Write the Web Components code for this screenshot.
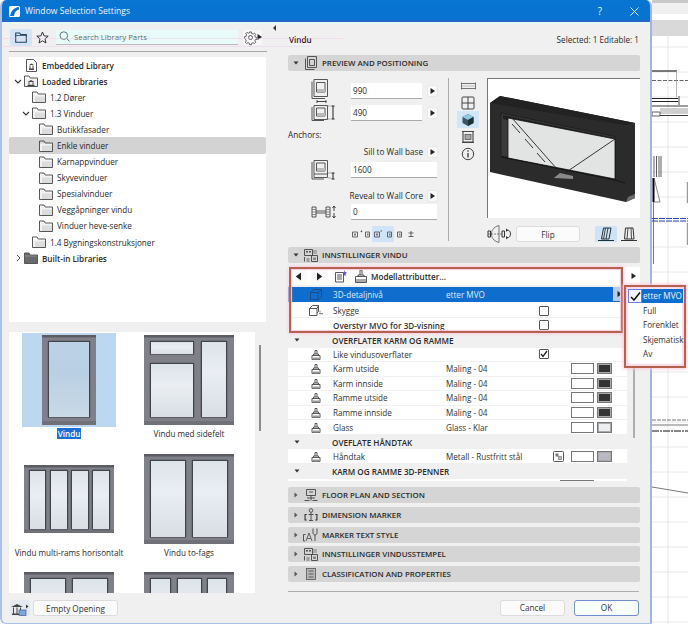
<!DOCTYPE html>
<html lang="no"><head><meta charset="utf-8"><title>Window Selection Settings</title>
<style>
html,body{margin:0;padding:0;background:#fff}
body{width:688px;height:624px;position:relative;overflow:hidden;display:flex;font-family:"Open Sans","Noto Sans",sans-serif;font-size:8.15px;color:#2a2a2a}
</style></head><body>
<selection-dialog>
  <library-pane slot="left">
    <tree-row slot="tree" icon="doc" bold>Embedded Library</tree-row>
    <tree-row slot="tree" icon="libfolder" exp="down" bold>Loaded Libraries</tree-row>
    <tree-row slot="tree" icon="folder" level="1">1.2 Dører</tree-row>
    <tree-row slot="tree" icon="folder" level="1" exp="down">1.3 Vinduer</tree-row>
    <tree-row slot="tree" icon="folder" level="2">Butikkfasader</tree-row>
    <tree-row slot="tree" icon="folder" level="2" selected>Enkle vinduer</tree-row>
    <tree-row slot="tree" icon="folder" level="2">Karnappvinduer</tree-row>
    <tree-row slot="tree" icon="folder" level="2">Skyvevinduer</tree-row>
    <tree-row slot="tree" icon="folder" level="2">Spesialvinduer</tree-row>
    <tree-row slot="tree" icon="folder" level="2">Veggåpninger vindu</tree-row>
    <tree-row slot="tree" icon="folder" level="2">Vinduer heve-senke</tree-row>
    <tree-row slot="tree" icon="folder" level="1">1.4 Bygningskonstruksjoner</tree-row>
    <tree-row slot="tree" icon="darkfolder" exp="right" bold>Built-in Libraries</tree-row>
    <part-thumb slot="parts" kind="single" selected>Vindu</part-thumb>
    <part-thumb slot="parts" kind="side">Vindu med sidefelt</part-thumb>
    <part-thumb slot="parts" kind="four">Vindu multi-rams horisontalt</part-thumb>
    <part-thumb slot="parts" kind="two">Vindu to-fags</part-thumb>
    <part-thumb slot="parts" kind="two"></part-thumb>
    <part-thumb slot="parts" kind="three"></part-thumb>
  </library-pane>
  <settings-pane slot="right">
    <panel-head slot="h1" icon="h-preview" open>PREVIEW AND POSITIONING</panel-head>
    <preview-panel slot="preview"></preview-panel>
    <panel-head slot="h2" icon="h-settings" open>INNSTILLINGER VINDU</panel-head>
    <attr-toolbar slot="tools">Modellattributter...</attr-toolbar>
    <attr-row slot="rows" icon="cube" value="etter MVO" active>3D-detaljnivå</attr-row>
    <attr-row slot="rows" icon="cubeshadow" check="off">Skygge</attr-row>
    <attr-row slot="rows" check="off" bold>Overstyr MVO for 3D-visning</attr-row>
    <attr-row slot="rows" group>OVERFLATER KARM OG RAMME</attr-row>
    <attr-row slot="rows" icon="brush" check="on">Like vindusoverflater</attr-row>
    <attr-row slot="rows" icon="brush" value="Maling - 04" swatch="#333">Karm utside</attr-row>
    <attr-row slot="rows" icon="brush" value="Maling - 04" swatch="#333">Karm innside</attr-row>
    <attr-row slot="rows" icon="brush" value="Maling - 04" swatch="#333">Ramme utside</attr-row>
    <attr-row slot="rows" icon="brush" value="Maling - 04" swatch="#333">Ramme innside</attr-row>
    <attr-row slot="rows" icon="brush" value="Glass - Klar" swatch="#eceef0">Glass</attr-row>
    <attr-row slot="rows" group>OVEFLATE HÅNDTAK</attr-row>
    <attr-row slot="rows" icon="brush" value="Metall - Rustfritt stål" swatch="#b9b9c6" link>Håndtak</attr-row>
    <attr-row slot="rows" group>KARM OG RAMME 3D-PENNER</attr-row>
    <panel-head slot="h3" icon="h-floor">FLOOR PLAN AND SECTION</panel-head>
    <panel-head slot="h3" icon="h-dim">DIMENSION MARKER</panel-head>
    <panel-head slot="h3" icon="h-text">MARKER TEXT STYLE</panel-head>
    <panel-head slot="h3" icon="h-settings">INNSTILLINGER VINDUSSTEMPEL</panel-head>
    <panel-head slot="h3" icon="h-class">CLASSIFICATION AND PROPERTIES</panel-head>
  </settings-pane>
</selection-dialog>
<cad-sheet></cad-sheet>
<ghost-line style="left:0;top:38px;width:343px"></ghost-line>
<ghost-line style="left:0;top:46px;width:310px"></ghost-line>
<note-box style="left:289px;top:267px;width:334px;height:66px"></note-box>
<pop-menu></pop-menu>
<script>
const S='fill="none" stroke="#444" stroke-width=".9"';
const ICONS={
 doc:[11,13,`<path ${S} d="M.5 .5h7l3 3v9H.5z"/><path d="M3 6l2.500-1.500L8 6zM3 9.500h5V11H3zM3.500 6.500h1v3h-1zM6.500 6.500h1v3h-1z" fill="#444"/>`],
 folder:[14,12,`<path d="M.5 3.500h13v8H.5z" fill="#f2f2f2"/><path d="M3 5.500h10V11H3z" fill="#dcdcdc"/><path ${S} d="M.5 11.500V1H5l1.200 2h7.300v8.500z"/>`],
 libfolder:[14,12,`<path d="M.5 3.500h13v8H.5z" fill="#f2f2f2"/><path ${S} d="M.5 11.500V1H5l1.200 2h7.300v8.500z"/><path d="M3.500 7L7 5l3.500 2zM3.500 9.700h7V11h-7zM4.500 7.200h1v2.400h-1zM8.500 7.200h1v2.400h-1z" fill="#444"/>`],
 darkfolder:[14,12,`<path d="M.5 11.500V1H5l1.200 2h7.300v8.500z" fill="#6a6a6a" stroke="#3e3e3e" stroke-width=".8"/><path d="M1 4h12" stroke="#aaa" stroke-width=".6"/>`],
 'chev-down':[10,10,`<path d="M2 4l3 3 3-3" fill="none" stroke="#333" stroke-width="1.100"/>`],
 'chev-right':[10,10,`<path d="M4 2l3 3-3 3" fill="none" stroke="#555" stroke-width="1"/>`],
 folderbtn:[12,11,`<path d="M.7 10.300V1h4l1 1.500h5.600v7.800z" fill="none" stroke="#25435f" stroke-width="1.100"/><path d="M.7 3.500h10.600" stroke="#25435f" stroke-width=".8"/>`],
 star:[13,13,`<path d="M6.500 1l1.600 3.900 4.100.3-3.200 2.700 1 4.100-3.500-2.200L3 12l1-4.100L.8 5.200l4.100-.3z" fill="none" stroke="#333" stroke-width="1"/>`],
 search:[11,11,`<circle cx="4.800" cy="4.600" r="3.800" fill="none" stroke="#4d6a66" stroke-width=".9"/><path d="M7.600 7.400l3 3" stroke="#4d6a66" stroke-width="1"/>`],
 gear:[13,13,`<circle cx="6.500" cy="6.500" r="2" fill="none" stroke="#333" stroke-width=".8"/><path d="M5.500 .7h2l.3 1.700 1.500.6 1.400-1 1.400 1.400-1 1.400.6 1.500 1.600.3v2l-1.600.3-.6 1.500 1 1.400-1.400 1.400-1.400-1-1.500.6-.3 1.600h-2l-.3-1.600-1.500-.6-1.400 1-1.400-1.400 1-1.400-.6-1.500L.1 7.700v-2l1.600-.3.6-1.500-1-1.400 1.400-1.400 1.400 1 1.500-.6z" transform="translate(.5 .3) scale(.93)" fill="none" stroke="#333" stroke-width=".8"/>`],
 libadd:[20,15,`<path d="M1 6l6-3 6 3zM2 12.500h10V14H2zM3 6.500h1v6H3zM6.500 6.500h1v6h-1zM10 6.500h1v6h-1z" fill="#444"/><rect x="9" y="9" width="7" height="5.500" fill="#7fa6dc" stroke="#3d5f94" stroke-width=".7"/><path d="M16 3.500l2.500 2-2.500 2z" fill="#333"/>`],
 'h-preview':[12,14,`<path ${S} d="M2.500 .5h9v11h-9zM.5 2.500v11h9"/><path ${S} d="M4.500 3.500h5v6h-5z"/>`],
 'h-settings':[14,13,`<path ${S} d="M.5 .5h8v6h-8z"/><path d="M2 2h2v1.500H2zM5 2h2v1.500H5z" fill="#555"/><path ${S} d="M.5 8v4.500M7.500 6.500h6v6h-6z"/><path d="M9 8.500h3V11H9z" fill="#888"/><path d="M9 1h4v4H9z" fill="#aaa"/><path d="M2.500 9.500h3v1h-3zM2.500 11.500h3v1h-3z" fill="#666"/>`],
 'h-floor':[14,12,`<path ${S} d="M2.500 .5h9v6h-9zM.5 11.500h5M8.500 11.500h5M7 6.500v5M3 9h8M5 3h4"/>`],
 'h-dim':[14,14,`<path d="M.5 6h2.200v1H1.600v4.500h1.100v1H.5zM13.500 6h-2.200v1h1.100v4.500h-1.100v1h2.200z" fill="#333"/><circle cx="7" cy="2.500" r="1.800" ${S}/><path ${S} d="M7 4.500v8M4.500 6.500h5M5 12.500h4"/>`],
 'h-text':[16,14,`<path ${S} d="M2.500 6.500H.5V13H2"/><path d="M3 13l3-8 3 8M4.300 10.500h3.400" fill="none" stroke="#444" stroke-width=".8"/><path ${S} d="M10 .5V5c0 2.500 4 2.500 4 0V.5M12 7v6"/>`],
 'h-class':[10,12,`<rect x=".5" y=".5" width="9" height="11" fill="#b8b8b8" stroke="#555" stroke-width=".8"/><path d="M2.500 3h5M2.500 6h5M2.500 9h5" stroke="#444" stroke-width=".8"/>`],
 cube:[12,11,`<path d="M.5 3.500H8v7H.5zM.5 3.500l3-3h8v7L8 10.500M8 3.500l3.500-3" fill="none" stroke="#1d4b82" stroke-width=".9"/>`],
 cubeshadow:[14,11,`<path ${S} d="M.5 3.500H8v7H.5zM.5 3.500l3-3h6v6L8 8M8 3.500l1.500-3"/><path d="M10 8h4v1.300h-4zM10.500 5.500h1v2h-1z" fill="#888"/>`],
 brush:[10,11,`<path ${S} d="M1 10.500h8v-4H1zM2.500 6.500V5h5v1.500M4 5V1.500h2V5"/><path d="M1.500 8.500h7v2h-7z" fill="#999"/>`],
 link:[11,11,`<rect x=".5" y=".5" width="10" height="10" rx="1" ${S}/><path d="M2.500 2.500h3v3h-3z" fill="#777"/><path d="M5.500 5.500h3v3h-3z" fill="#bbb" stroke="#555" stroke-width=".5"/>`],
 back:[7,9,`<path d="M6 .5v8L.8 4.500z" fill="#222"/>`],
 fwd:[7,9,`<path d="M1 .5v8l5.200-4z" fill="#222"/>`],
 tri:[5,6,`<path d="M.5 0v6L5 3z" fill="#222"/>`],
 sheetdoc:[13,14,`<path ${S} d="M.5 3.500h8V13h-8zM2 6h5M2 8h5M2 10h5"/><path d="M9 1l1 2 2 .5L10.500 5l.3 2L9 6" fill="#6c4fd0"/>`],
 paintbrush:[13,14,`<path ${S} d="M.5 13.500h11v-6H.5zM3 7.500V6h6v1.500M5 6V1h2v5"/><path d="M1 10h10v3H1z" fill="#aaa"/>`],
 'w-size':[18,24,`<path ${S} d="M3 .5h13.500v17H3z"/><path ${S} d="M1 2.500v17h13M5.500 3.500H14V13H5.500z"/><path d="M6 10h8v3H6z" fill="#bbb"/><path d="M6 22.500h9M6 21v3M15 21v3" stroke="#333" stroke-width=".9"/>`],
 'h-size':[25,16,`<path ${S} d="M3 .5h13.500v14H3zM1 2v13.500h12M5.500 3H14v8H5.500z"/><path d="M6 8h8v3H6z" fill="#bbb"/><path d="M17 1h2.500M17 14h2.500" stroke="#999" stroke-width=".9"/><path d="M22 1v13M20.500 1h3M20.500 14h3" stroke="#222" stroke-width="1"/>`],
 sill:[25,20,`<path ${S} d="M3 .5h13.500v17H3zM1 2v17h12M5.500 3H14v8H5.500zM3 14h13.500"/><path d="M6 8h8v3H6z" fill="#bbb"/><path d="M22 13v6M20.500 13h3M20.500 19h3" stroke="#222" stroke-width="1"/><path d="M17 13h3M17 18h3" stroke="#999" stroke-width=".9"/>`],
 reveal:[25,12,`<path ${S} d="M1 1h4v10H1zM15 1h4v10h-4zM5 5h10M5 7h10"/><path d="M1 3.500h4M1 6h4M1 8.500h4M15 3.500h4M15 6h4M15 8.500h4" stroke="#666" stroke-width=".7"/><path d="M23 0v5M21.500 2L23 0l1.500 2M23 7v5M21.500 10l1.500 2 1.500-2" fill="none" stroke="#333" stroke-width=".9"/>`],
 anchors:[64,16,`<rect x="21" y="0" width="22" height="16" rx="1" fill="#cfe4f8"/><g fill="none" stroke="#555" stroke-width=".9"><path d="M1.500 6h5v5h-5zM14.500 6h4v5h-4zM23.500 6h5v5h-5zM36.500 6h4v5h-4zM46.500 6h4v5h-4zM57.500 7h5M57.500 10.500h5M60 5v6"/></g><g fill="#777"><path d="M3 7.500h2v2H3zM16 7.500h1.500v2H16zM25 7.500h2v2h-2zM38 7.500h1.500v2H38zM48 7.500h1.500v2H48z"/></g><g fill="#555"><path d="M9.500 5h1.800v.8H9.500zM10 4.300h.8v2H10zM29.500 4.500h1.500v1h-1.500z"/></g>`],
 'v-plan':[15,8,`<path d="M.5 .5v7M14.500 .5v7M.5 1.500h14M.5 6.500h14" fill="none" stroke="#555" stroke-width=".8"/><path d="M.5 4h14" stroke="#999" stroke-width=".6"/>`],
 'v-grid':[14,14,`<rect x="1" y="1" width="12" height="12" rx="1" fill="none" stroke="#444"/><path d="M7 1v12M1 7h12" stroke="#444"/>`],
 'v-3d':[14,14,`<path d="M7 1l5.500 3v6L7 13l-5.500-3V4z" fill="#3a5560"/><path d="M7 7l5.500-3L7 1 1.500 4z" fill="#8ecae0"/><path d="M7 7v6l5.500-3V4z" fill="#1d3038"/>`],
 'v-side':[14,12,`<path d="M1 .5h12M1 11.500h12" stroke="#444" stroke-width="1.200"/><path d="M2 1v10h10V1" fill="none" stroke="#444" stroke-width="1.100"/><rect x="4" y="3.500" width="6" height="5" fill="#aaa" stroke="#444" stroke-width=".7"/>`],
 'v-info':[14,14,`<circle cx="7" cy="7" r="5.700" fill="none" stroke="#444"/><path d="M6.300 6h1.400v4.500H6.300zM6.300 3.300h1.400v1.400H6.300z" fill="#444"/>`],
 flipicon:[25,18,`<path d="M12 .5C6 2 4.500 6 4.500 9S6 16 12 17.500z" fill="none" stroke="#555" stroke-width=".8"/><path d="M1 9h15" stroke="#555" stroke-width=".7" stroke-dasharray="2 1"/><path d="M1 6h2.500v6H1zM15 6h2.500v6H15z" fill="none" stroke="#333"/><path d="M19 5.500c3-1 4.500 1 4.500 3.500s-2 4.500-4.500 3.500" fill="none" stroke="#333"/><path d="M19 3.500V7l2-2zM19 11v3.500l2-2z" fill="#333"/>`],
 'win-a':[16,15,`<path d="M5.500 1H13l-2 11H3.500z" fill="none" stroke="#233" stroke-width="1"/><path d="M7.500 1l-2 11M10 1L8 12" stroke="#233" stroke-width=".9"/><path d="M0 13.500h16" stroke="#233" stroke-width="1.100"/>`],
 'win-b':[16,15,`<path d="M4.500 1H12l1 11H3.500z" fill="none" stroke="#333" stroke-width="1"/><path d="M7 1L6 12M10 1l.5 11" stroke="#333" stroke-width=".9"/><path d="M0 13.500h16" stroke="#333" stroke-width="1.100"/>`],
 logo:[11,11,`<rect width="11" height="11" rx="1.500" fill="#fff"/><path d="M1 10C2 5 5 1.500 10 1v2.500C7.500 4 5.500 6 5 10z" fill="#0a6fcf"/>`]
};
const def=(tag,css,render)=>customElements.define(tag,class extends HTMLElement{
  connectedCallback(){if(this.shadowRoot)return;const r=this.attachShadow({mode:'open'});r.innerHTML=`<style>${css}</style>`+render(this);}
});
def('ac-icon',':host{display:inline-flex;flex:none;line-height:0} svg{display:block;overflow:visible}',el=>{
  const [w,h,b]=ICONS[el.getAttribute('name')];
  return `<svg width="${w}" height="${h}" viewBox="0 0 ${w} ${h}">${b}</svg>`;
});
def('selection-dialog',`
 :host{display:flex;flex-direction:column;width:652px;height:624px;box-sizing:border-box;flex:none;background:#f0f0f0;border-right:2px solid #a2b4e6;border-left:2px solid #a9c0e8;border-bottom:1px solid #a9c0e8;border-radius:6px 6px 0 6px;overflow:hidden;position:relative}
 .title{height:22px;flex:none;background:linear-gradient(#0875d3 0,#0872d0 85%,#2e63c7 100%);display:flex;align-items:center;color:#eaf4ff;font-size:8.600px;padding-left:7px;gap:5px}
 .title span{flex:1}
 .help{flex:none!important;width:16px;font-size:10px;color:#dff;margin-right:17px;text-align:center}
 .close{margin-right:11px}
 .band{height:2px;background:#e4f8f4;flex:none;margin-bottom:-2px;position:relative}
 .body{flex:1;display:flex;min-height:0}
 .left{width:270px;flex:none}
 .split{width:16px;flex:none;padding-top:3px;box-sizing:border-box}
 .split i{display:block;width:0;height:0;border:3px solid transparent;border-right:3px solid #333;border-left:0;margin-left:1px}
 .right{flex:1}
`,()=>`<div class="title"><ac-icon name="logo"></ac-icon><span>Window Selection Settings</span><span class="help">?</span>
 <svg class="close" width="9" height="9" viewBox="0 0 9 9"><path d="M.5 .5l8 8M8.500 .5l-8 8" stroke="#dff" stroke-width="1"/></svg></div><div class="band"></div>
 <div class="body"><div class="left"><slot name="left"></slot></div><div class="split"><i></i></div><div class="right"><slot name="right"></slot></div></div>`);
def('library-pane',`
 :host{display:flex;flex-direction:column;height:100%;padding:6px 4px 0 7px;box-sizing:border-box}
 .bar{height:18px;display:flex;align-items:center;flex:none}
 .fbtn{width:22px;height:17px;background:#d3e5f5;border-radius:2px;display:flex;align-items:center;justify-content:center;margin-left:1px}
 .star{margin:0 7px 0 4px;display:flex}
 .search{width:182px;height:15px;background:#e8fbf8;border-bottom:1px solid #bbb;display:flex;align-items:center;gap:4px;padding-left:3px;box-sizing:border-box;color:#566b67;font-size:7.800px}
 .gear{margin-left:5px;width:19px;height:15px;background:#f7f7f7;border-radius:2px;display:flex;align-items:center;padding-left:1px;box-sizing:border-box}
 hr{height:1px;border:0;background:#a8a8a8;margin:5px 1px 5px 0;flex:none}
 .tree{height:265px;background:#fff;flex:none;width:257px;box-sizing:border-box}
 .parts-wrap{margin-top:10px;height:261px;flex:none;display:flex;width:257px}
 .parts{width:246px;height:261px;background:#fff;display:grid;grid-template-columns:120px 120px;grid-auto-rows:118.5px;overflow:hidden;padding-top:1px;box-sizing:border-box;flex:none}
 .sb{width:2px;height:86px;background:#8b8b8b;margin:13px 0 0 4px;flex:none}
 .foot{display:flex;margin-top:7px;gap:3px;padding-left:1px;align-items:center}
 .lib{width:20px;height:16px;background:#e3e9ee;border-radius:2px;display:flex;align-items:center;justify-content:center}
 push-btn{width:85px}
`,()=>`<div class="bar"><div class="fbtn"><ac-icon name="folderbtn"></ac-icon></div><div class="star"><ac-icon name="star"></ac-icon></div>
 <div class="search"><ac-icon name="search"></ac-icon><span>Search Library Parts</span></div><div class="gear"><ac-icon name="gear"></ac-icon><ac-icon name="tri"></ac-icon></div></div>
 <hr><div class="tree"><slot name="tree"></slot></div>
 <div class="parts-wrap"><div class="parts"><slot name="parts"></slot></div><div class="sb"></div></div>
 <div class="foot"><div class="lib"><ac-icon name="libadd"></ac-icon></div><push-btn>Empty Opening</push-btn></div>`);
def('tree-row',`
 :host{display:flex;align-items:center;height:16.100px;box-sizing:border-box;white-space:nowrap}
 :host([selected]){background:#d3d3d3;border-radius:2px}
 :host([bold]){font-weight:600}
 .c{width:10px;height:10px;flex:none;margin-right:1px}
 .i{margin-right:4px;display:flex;width:14px;justify-content:center;flex:none}
`,el=>{
 const lv=+(el.getAttribute('level')||0),pad=[4,12,19][lv],ex=el.getAttribute('exp'),ic=el.getAttribute('icon');
 return `<span style="width:${pad}px;flex:none"></span><span class="c">${ex?`<ac-icon name="chev-${ex}"></ac-icon>`:''}</span><span class="i"><ac-icon name="${ic}"></ac-icon></span><slot></slot>`;
});
const pane=(x,y,w,h)=>`<rect x="${x}" y="${y}" width="${w}" height="${h}" fill="url(#g)"/><path d="M${x-.7} ${y+h}V${y-.7}H${x+w+.7}V${y+h}" fill="none" stroke="#33353b" stroke-width="1"/><path d="M${x-1} ${y+h+.6}H${x+w+1}" stroke="#5a5b62" stroke-width="1"/>`;
const KIND={
 single:[18,0,54,90,[[7,7,40,75]]],
 side:[0,0,90,90,[[7,7,42,12],[7,29,42,53],[58,7,24,75]]],
 four:[0,11,90,68,[[6,6,15,58],[27,6,16,58],[48,6,16,58],[69,6,16,58]]],
 two:[0,0,90,90,[[7,7,34,76],[49,7,34,76]]],
 three:[0,0,90,90,[[7,7,19,76],[34,7,23,76],[64,7,18,76]]]
};
def('part-thumb',`
 :host{display:flex;flex-direction:column;align-items:center;width:120px;font-size:8.150px;white-space:nowrap}
 .t{width:94px;height:94px;display:flex;align-items:center;justify-content:center;flex:none}
 :host([selected]) .t{background:#bdd7f1}
 .l{margin-top:1px;line-height:11px;height:11px;padding:0 1px}
 :host([selected]) .l{background:#1b6ed8;color:#fff;font-weight:600}
`,el=>{
 const [x,y,w,h,ps]=KIND[el.getAttribute('kind')];
 const sel=el.hasAttribute('selected');
 return `<div class="t"><svg width="90" height="90" viewBox="0 0 90 90"><defs><linearGradient id="g" x1="0" y1="0" x2="0" y2="1"><stop offset="0" stop-color="${sel?'#bcd2e6':'#dde3ea'}"/><stop offset=".4" stop-color="${sel?'#b9d0e4':'#eaeef3'}"/><stop offset="1" stop-color="${sel?'#c9d9e6':'#d8dee4'}"/></linearGradient></defs>
 <rect x="${x}" y="${y}" width="${w}" height="${h}" fill="#7f8089"/><rect x="${x}" y="${y}" width="${w}" height="2.500" fill="#5c5d64"/><rect x="${x}" y="${y+h-4}" width="${w}" height="4" fill="#6f7078"/>${ps.map(p=>pane(x+p[0],y+p[1],p[2],p[3])).join('')}</svg></div><div class="l"><slot></slot></div>`;
});
def('push-btn',`
 :host{display:flex;align-items:center;justify-content:center;height:16px;background:#fbfbfb;border:1px solid #dcdcdc;border-radius:3px;box-sizing:border-box;font-size:8.200px;color:#333;flex:none}
 :host([primary]){border:1px solid #6f8fc7;background:#f7fefd}
`,()=>`<slot></slot>`);
def('settings-pane',`
 :host{display:flex;flex-direction:column;height:100%;box-sizing:border-box;padding-top:11px;width:352px}
 .top{display:flex;justify-content:space-between;height:12px;align-items:center;margin-bottom:10px;padding:0 1px}
 .top b{font-weight:600;color:#3a0a1e}
 .tools{margin-top:4px;height:18px;flex:none}
 .tablewrap{margin-top:2px;height:194px;overflow:hidden;position:relative;width:339px;background:#fff}
 .mid{position:relative;height:224px;flex:none}
 .stack{display:flex;flex-direction:column;gap:3.800px}
 .sep{height:1px;background:#adadad;margin-top:8.800px;flex:none;width:351px}
 .foot{display:flex;justify-content:flex-end;gap:9px;margin-top:8px;padding-right:1px}
 push-btn{width:65px}
 .msb{position:absolute;left:345px;top:37px;width:2px;height:138px;background:#aeaeae}
`,()=>`<div class="top"><b>Vindu</b><span>Selected: 1 Editable: 1</span></div>
 <slot name="h1"></slot><slot name="preview"></slot><slot name="h2"></slot>
 <div class="mid"><div class="tools"><slot name="tools"></slot></div><div class="tablewrap"><slot name="rows"></slot><attr-clip></attr-clip></div><div class="msb"></div></div>
 <div class="stack"><slot name="h3"></slot></div><div class="sep"></div>
 <div class="foot"><push-btn>Cancel</push-btn><push-btn primary>OK</push-btn></div>`);
def('attr-clip',':host{display:block;height:8px;position:relative} i{position:absolute;right:33px;top:1px;width:34px;height:8px;border:1px solid #777;border-bottom:0;box-sizing:border-box;display:block}',()=>`<i></i>`);
def('panel-head',`
 :host{display:flex;align-items:center;height:16px;background:#d5d5d5;border-radius:2px;font-weight:600;font-size:7.900px;color:#2c2c2c;flex:none;white-space:nowrap;width:352px}
 .a{width:16px;padding-left:5px;box-sizing:border-box;display:flex;flex:none}
 .i{width:14px;flex:none;display:flex;justify-content:center;margin-right:4px}
`,el=>{
 const open=el.hasAttribute('open');
 return `<span class="a"><svg width="6" height="6" viewBox="0 0 6 6">${open?'<path d="M.5 1.500h5L3 4.500z" fill="#333"/>':'<path d="M1.500 .5v5L4.500 3z" fill="#555"/>'}</svg></span><span class="i"><ac-icon name="${el.getAttribute('icon')}"></ac-icon></span><slot></slot>`;
});
def('num-row',`
 :host{display:grid;grid-template-columns:63px 71px 6px 9px;align-items:center;height:16px}
 .ic{display:flex;justify-content:flex-start;padding-left:23px;box-sizing:border-box}
 .f{background:#fff;border-bottom:1px solid #aaa;height:16px;line-height:15px;box-sizing:border-box;padding-left:2px;font-size:8.200px}
 :host([wide]) .f{grid-column:2/5}
 .b{grid-column:4;width:9px;height:10px;background:#fafafa;border-radius:1px;display:flex;align-items:center;justify-content:center;box-shadow:0 0 1px #aaa}
`,el=>`<span class="ic"><ac-icon name="${el.getAttribute('icon')}"></ac-icon></span><span class="f"><slot></slot></span>${el.hasAttribute('wide')?'':'<span class="b"><ac-icon name="tri"></ac-icon></span>'}`);
def('preview-panel',`
 :host{display:grid;grid-template-columns:160px 1px 38px 153px;height:176px;box-sizing:border-box}
 .form{display:flex;flex-direction:column;padding-top:8px}
 .lab{height:12px;line-height:12px;font-size:8.200px;margin-top:8px}
 .rl{display:flex;justify-content:flex-end;align-items:center;height:12px;line-height:12px;font-size:8.200px;width:149px;gap:5px}
 .b{width:9px;height:10px;background:#fafafa;border-radius:1px;display:flex;align-items:center;justify-content:center;box-shadow:0 0 1px #aaa}
 .anch{margin:6px 0 0 63px;display:flex}
 .rule{background:#aaa;margin:7px 0 6px}
 .views{display:flex;flex-direction:column;align-items:center;padding-top:6px}
 .views span{width:22px;height:17px;display:flex;align-items:center;justify-content:center;border-radius:1px}
 .views .on{background:#d3e6f8}
 .pv{display:flex;flex-direction:column;padding-top:7px}
 .pic{height:140px;background:#fff;border-top:1px solid #777;border-left:1px solid #777;box-sizing:border-box}
 .pic svg{display:block}
 .fl{display:flex;align-items:center;margin-top:8px;height:16px}
 .fl push-btn{width:64px;margin-left:4px;margin-right:15px}
 .w{width:22px;height:16px;display:flex;align-items:center;justify-content:center;border-radius:1px}
 .w.on{background:#cfe3f7;margin-right:2px}
`,()=>`<div class="form">
 <num-row icon="w-size">990</num-row><num-row icon="h-size" style="margin-top:10px">490</num-row>
 <div class="lab">Anchors:</div>
 <div class="rl" style="margin-top:5px">Sill to Wall base<span class="b"><ac-icon name="tri"></ac-icon></span></div>
 <num-row icon="sill" wide style="margin-top:2px">1600</num-row>
 <div class="rl" style="margin-top:14px">Reveal to Wall Core<span class="b"><ac-icon name="tri"></ac-icon></span></div>
 <num-row icon="reveal" wide style="margin-top:2px">0</num-row>
 <div class="anch"><ac-icon name="anchors"></ac-icon></div></div>
 <div class="rule"></div>
 <div class="views"><span><ac-icon name="v-plan"></ac-icon></span><span><ac-icon name="v-grid"></ac-icon></span><span class="on"><ac-icon name="v-3d"></ac-icon></span><span><ac-icon name="v-side"></ac-icon></span><span><ac-icon name="v-info"></ac-icon></span></div>
 <div class="pv"><div class="pic"><svg width="152" height="139" viewBox="488 79 152 139">
  <path d="M490 103l10-7 135 27v75l-9 4-136-30z" fill="#2b2b2b"/>
  <path d="M490 103l10-7 135 27-10 2z" fill="#222"/>
  <path d="M501 113l114 23.500V180l-114-24z" fill="#3a3a3a" stroke="#1c1c1c" stroke-width=".8"/>
  <path d="M503 115l112 23v5l-112-24z" fill="#1f1f1f"/>
  <path d="M508 118l107 21v40l-107-21z" fill="#e2e4e3" stroke="#141414" stroke-width=".8"/>
  <path d="M512 118l45 51M615 139l-50 34" stroke="#222" stroke-width=".9" fill="none"/>
  <path d="M512 124l8 9M525 139l8 9M537 153l8 9" stroke="#222" stroke-width=".9"/>
  <path d="M501 157l114 23 10 3" fill="none" stroke="#151515" stroke-width="1"/>
  <path d="M555 177l5-4 13 3v3l-19-1z" fill="#8a8a8a"/>
  <path d="M626 202l9-4v-4l-7 3z" fill="#6c6c6c"/>
 </svg></div>
 <div class="fl"><ac-icon name="flipicon"></ac-icon><push-btn>Flip</push-btn><span class="w on"><ac-icon name="win-a"></ac-icon></span><span class="w"><ac-icon name="win-b"></ac-icon></span></div></div>`);
def('attr-toolbar',`
 :host{display:flex;align-items:center;height:18px;background:#fff;font-weight:600;width:352px;box-sizing:border-box;padding-left:3px;white-space:nowrap;font-size:8.100px}
 .a{width:15px;display:flex;justify-content:center;height:15px;align-items:center;background:#fafafa;border-radius:1px;box-shadow:0 0 1px #ccc;margin-right:6px}
 .m{margin:0 3px 0 0;display:flex}
 .tail{margin-left:auto;margin-right:4px;display:flex}
`,()=>`<span class="a"><ac-icon name="back"></ac-icon></span><span class="a"><ac-icon name="fwd"></ac-icon></span><span class="a" style="margin-left:0;margin-right:5px;width:17px"><ac-icon name="sheetdoc"></ac-icon></span><span class="m"><ac-icon name="paintbrush"></ac-icon></span><slot></slot><span class="tail"><ac-icon name="tri"></ac-icon></span>`);
def('attr-row',`
 :host{display:grid;grid-template-columns:45px 113px 93px 32px 56px;align-items:center;height:14.550px;background:#fff;border-bottom:1px solid #f1f1f1;box-sizing:border-box;white-space:nowrap;font-size:8.150px;color:#333}
 :host([bold]){font-weight:600}
 :host([group]){background:#f0f0f0;font-weight:600;border:0;color:#2a2a2a}
 :host([group]) .ic{justify-content:flex-start;padding-left:6px}
 :host([group]) .t{margin-left:-1px}
 :host([active]){background:#0f6dcd;color:#dcecff;border:0;margin-bottom:2.400px}
 .ic{display:flex;justify-content:center;padding-left:10px;box-sizing:border-box}
 .c{display:flex;align-items:center}
 .box{width:10px;height:10px;border:1px solid #555;box-sizing:border-box;background:#fff;border-radius:1px;display:block}
 .sw{display:flex;gap:3px}
 .sw i{display:block;height:11px;border:1px solid #777;box-sizing:border-box;background:#fff}
 .sw i:first-child{width:23px}.sw i:last-child{width:15px;box-shadow:inset 0 0 0 1px #aaa}
 .btn{grid-column:4/6;justify-self:end;margin-right:1px;width:13px;height:14px;background:#b9cbe6;display:flex;align-items:center;justify-content:center}
`,el=>{
 const g=el.hasAttribute('group'),ic=el.getAttribute('icon'),v=el.getAttribute('value')||'',ch=el.getAttribute('check'),sw=el.getAttribute('swatch');
 if(g)return `<span class="ic"><svg width="6" height="6" viewBox="0 0 6 6"><path d="M.5 1.500h5L3 4.500z" fill="#333"/></svg></span><span class="t" style="grid-column:2/6"><slot></slot></span>`;
 const act=el.hasAttribute('active');
 return `<span class="ic">${ic?`<ac-icon name="${ic}"></ac-icon>`:''}</span><span><slot></slot></span><span>${v}</span>`+
 (act?`<span class="btn"><ac-icon name="tri"></ac-icon></span>`:
 `<span class="c">${ch?`<span class="box">${ch=='on'?'<svg width="8" height="8" viewBox="0 0 8 8" style="display:block"><path d="M1 4l2 2.500L7 1" fill="none" stroke="#222" stroke-width="1.300"/></svg>':''}</span>`:''}${el.hasAttribute('link')?'<ac-icon name="link" style="margin-left:14px"></ac-icon>':''}</span><span class="sw">${sw?`<i></i><i style="background:${sw}"></i>`:''}</span>`);
});
def('ghost-line',':host{position:absolute;height:1px;background:#f7b9e4;opacity:.35;pointer-events:none;z-index:4}',()=>'');
def('note-box',':host{position:absolute;box-sizing:border-box;border:2px solid #b5634f;box-shadow:0 0 3px 1px #f9cbdc,inset 0 0 1px 1px #f9cbdc;pointer-events:none;z-index:5}',()=>'');
def('pop-menu',`
 :host{position:absolute;left:624px;top:285px;width:62px;height:83px;box-sizing:border-box;border:2px solid #b5634f;background:#fff;box-shadow:0 0 3px 1px #f9cbdc,inset 0 0 2px 2px #fbd7e3;padding:2px 1px 2px 2px;z-index:6;font-size:8.150px;color:#333;white-space:nowrap}
 .it{height:14.600px;line-height:14.600px;padding-left:15px;box-sizing:border-box}
 .on{background:#0f6dcd;color:#eaf4ff;position:relative;height:14px;line-height:14px;margin-bottom:.600px}
 .k{position:absolute;left:0;top:0;width:14px;height:14px;background:#f6f6ff;border:1px solid #6b7fd6;box-sizing:border-box;display:flex;align-items:center;justify-content:center}
`,()=>`<div class="it on"><span class="k"><svg width="11" height="9" viewBox="0 0 11 9"><path d="M1 5l3 3 6-7.500" fill="none" stroke="#111" stroke-width="1.500"/></svg></span>etter MVO</div><div class="it">Full</div><div class="it">Forenklet</div><div class="it">Skjematisk</div><div class="it">Av</div>`);
def('cad-sheet',':host{display:block;width:36px;height:624px;flex:none;background:#fff} svg{display:block}',()=>{
 let g='';
 for(let y=47;y<624;y+=25)g+=`<path d="M652 ${y}h36" stroke="#e2e2e2" stroke-width=".8"/>`;
 return `<svg width="36" height="624" viewBox="652 0 36 624">
 <path d="M652 0h36v3h-36z" fill="#c9c9c9"/><path d="M652 3h36v11h-36z" fill="#f0f0f0"/><path d="M652 20h36v16h-36z" fill="#d9d9d9"/>
 ${g}<path d="M668 36v588" stroke="#dedede" stroke-width=".8"/>
 <path d="M652 71h25" stroke="#222" stroke-width="1.200"/><path d="M652 80.500h36" stroke="#666" stroke-dasharray="4 1.500"/><path d="M676.500 71v26" stroke="#999" stroke-width=".7"/>
 <path d="M652 98.500h26M652 101.500h26" stroke="#222" stroke-width="1.100"/><path d="M679 96v9" stroke="#777" stroke-width="1.400"/>
 <path d="M652 106h36M652 115.500h36" stroke="#222" stroke-width=".9"/><path d="M660 108h28v6h-28z" fill="#cfcfcf"/><path d="M652 112h8v4h-8z" fill="#fff" stroke="#222" stroke-width=".7"/>
 <path d="M654 156v21M656.500 156v21M659 156v21M661 156v21" stroke="#333" stroke-width=".8"/>
 <path d="M653.500 178v24" stroke="#000" stroke-width="2"/><path d="M654 178l6 24h-6" fill="none" stroke="#555" stroke-width=".7"/>
 <path d="M653.500 202v62" stroke="#777" stroke-width="1"/>
 <path d="M652 218.500h36M652 221h36" stroke="#2a46b8" stroke-width="1.100" stroke-dasharray="6 1"/>
 <path d="M687.500 182v21M687.500 223v22" stroke="#999" stroke-width="1.400"/>
 <path d="M652 420h36" stroke="#777" stroke-width="1" stroke-dasharray="4 1"/><path d="M652 425h36" stroke="#777" stroke-width="1"/><path d="M652 431h36" stroke="#111" stroke-width="1.200" stroke-dasharray="7 1 2 1"/>
 <path d="M652 487l36 6" stroke="#555" stroke-width=".8"/>
 </svg>`;
});
</script>
</body></html>
